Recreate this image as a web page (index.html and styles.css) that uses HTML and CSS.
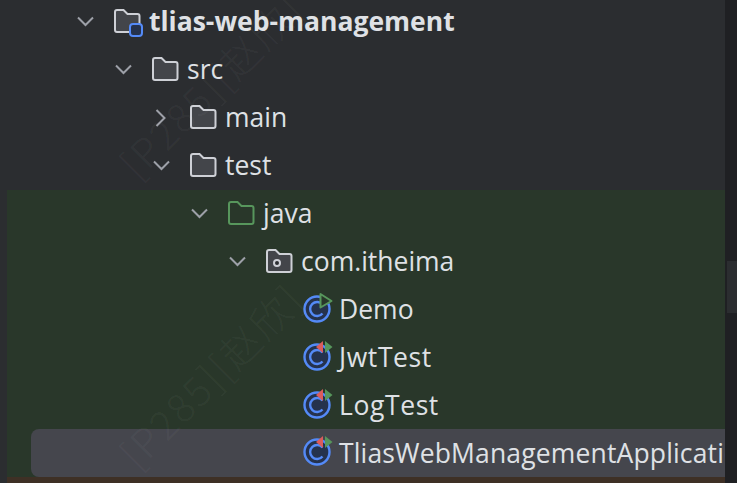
FILE: index.html
```html
<!DOCTYPE html>
<html lang="en">
<head>
    <meta charset="UTF-8">
    <meta name="viewport" content="width=device-width, initial-scale=1.0">
    <title>Project tree</title>
    <link rel="stylesheet" href="styles.css">
</head>
<body>
<svg class="defs" width="0" height="0">
    <symbol id="chev-down" viewBox="0 0 24 24"><path d="M5 7.500l7.500 7.500L20 7.500"/></symbol>
    <symbol id="chev-right" viewBox="0 0 24 24"><path d="M7.500 4l8 8-8 8"/></symbol>
    <symbol id="folder" viewBox="0 0 32 32"><path d="M6 4h6.500l4 4h10a2 2 0 0 1 2 2v14a2 2 0 0 1-2 2H6a2 2 0 0 1-2-2V6a2 2 0 0 1 2-2z"/></symbol>
    <symbol id="cls" viewBox="0 0 32 32">
        <circle class="cls-ring" cx="16" cy="15" r="12.500"/>
        <path class="cls-c" d="M21.500 10.500a7 7 0 1 0 0 9"/>
    </symbol>
</svg>
<div class="sidebar-edge"></div>
<div class="main">
    <div class="tree">
        <div class="row d0">
            <svg class="chev"><use href="#chev-down"/></svg>
            <svg class="icon folder"><use href="#folder"/><rect class="module-badge" x="19" y="18" width="12" height="12" rx="3"/></svg>
            <span class="label bold">tlias-web-management</span>
        </div>
        <div class="row d1">
            <svg class="chev"><use href="#chev-down"/></svg>
            <svg class="icon folder"><use href="#folder"/></svg>
            <span class="label">src</span>
        </div>
        <div class="row d2">
            <svg class="chev"><use href="#chev-right"/></svg>
            <svg class="icon folder"><use href="#folder"/></svg>
            <span class="label">main</span>
        </div>
        <div class="row d2">
            <svg class="chev"><use href="#chev-down"/></svg>
            <svg class="icon folder"><use href="#folder"/></svg>
            <span class="label">test</span>
        </div>
        <div class="test-root">
            <div class="row d3">
                <svg class="chev"><use href="#chev-down"/></svg>
                <svg class="icon folder-green"><use href="#folder"/></svg>
                <span class="label">java</span>
            </div>
            <div class="row d4">
                <svg class="chev"><use href="#chev-down"/></svg>
                <svg class="icon folder"><use href="#folder"/><circle class="pkg-dot" cx="14" cy="17" r="3"/></svg>
                <span class="label">com.itheima</span>
            </div>
            <div class="row d5">
                <svg class="icon"><use href="#cls"/><path class="run" d="M19.500 0v13.500L30.500 7z"/></svg>
                <span class="label">Demo</span>
            </div>
            <div class="row d5">
                <svg class="icon"><use href="#cls"/><path class="arrow-red" d="M22 -1v12l-7-6z"/><path class="arrow-green" d="M24 -1v12l7.500-6z"/></svg>
                <span class="label caps">JwtTest</span>
            </div>
            <div class="row d5">
                <svg class="icon"><use href="#cls"/><path class="arrow-red" d="M22 -1v12l-7-6z"/><path class="arrow-green" d="M24 -1v12l7.500-6z"/></svg>
                <span class="label caps">LogTest</span>
            </div>
            <div class="row selected-wrap">
                <div class="pill">
                    <svg class="icon"><use href="#cls"/><path class="arrow-red" d="M22 -1v12l-7-6z"/><path class="arrow-green" d="M24 -1v12l7.500-6z"/></svg>
                    <span class="label long">TliasWebManagementApplication</span>
                </div>
            </div>
        </div>
        <div class="changed-row"></div>
    </div>
    <div class="watermark wm-top">[P285][赵欣]</div>
    <div class="watermark wm-bottom">[P285][赵欣]</div>
</div>
<div class="scroll-track">
    <div class="scroll-thumb"></div>
</div>
</body>
</html>
```

FILE: styles.css
```css
* {
    margin: 0;
    padding: 0;
    box-sizing: border-box;
}

html, body {
    width: 100%;
    height: 100%;
    overflow: hidden;
}

body {
    display: flex;
    background: #2b2d30;
    font-family: "Open Sans", sans-serif;
    font-size: 26.5px;
    color: #dfe1e5;
}

.defs {
    position: absolute;
}

.sidebar-edge {
    width: 7px;
}

.main {
    position: relative;
    flex: 1;
    overflow: hidden;
    min-width: 0;
}

.scroll-track {
    width: 12px;
    background: #1f2023;
    padding-top: 261px;
    padding-left: 2px;
}

.scroll-thumb {
    height: 52px;
    background: #2b2d30;
}

.tree {
    margin-top: -2px;
}

.row {
    display: flex;
    align-items: center;
    height: 48px;
    white-space: nowrap;
}

.test-root {
    background: #29372a;
}

.changed-row {
    height: 8px;
    background: #3e3025;
}

.d0 { padding-left: 66px; }
.d1 { padding-left: 104px; }
.d2 { padding-left: 142px; }
.d3 { padding-left: 180px; }
.d4 { padding-left: 218px; }
.d5 { padding-left: 294px; }

.selected-wrap {
    height: 47px;
    align-items: flex-start;
    padding-left: 24px;
}

.pill {
    display: flex;
    align-items: center;
    width: 100%;
    height: 48px;
    margin-top: -1px;
    padding-left: 270px;
    background: #45464d;
    border-radius: 8px 0 0 8px;
}

.chev {
    width: 24px;
    height: 24px;
    margin-right: 14px;
    fill: none;
    stroke: #9da0a8;
    stroke-width: 2;
}

.icon {
    width: 32px;
    height: 32px;
    flex-shrink: 0;
    overflow: visible;
}

.label {
    margin-left: 6px;
    margin-bottom: 2px;
}

.caps {
    letter-spacing: 0.6px;
}

.long {
    letter-spacing: 0.15px;
    margin-bottom: 0;
}

.bold {
    font-weight: 700;
}

.folder {
    fill: #43454a;
    stroke: #ced0d6;
    stroke-width: 2;
}

.folder-green {
    fill: none;
    stroke: #57965c;
    stroke-width: 2;
}

.module-badge {
    fill: #25324d;
    stroke: #548af7;
    stroke-width: 2;
}

.pkg-dot {
    fill: #2b2d30;
    stroke: #ced0d6;
    stroke-width: 2;
}

.cls-ring {
    fill: #25324d;
    stroke: #548af7;
    stroke-width: 2.400;
}

.cls-c {
    fill: none;
    stroke: #548af7;
    stroke-width: 2.400;
}

.run {
    fill: #29372a;
    stroke: #57965c;
    stroke-width: 2;
    stroke-linejoin: round;
}

.arrow-red {
    fill: #db5c5c;
}

.arrow-green {
    fill: #57965c;
}

.watermark {
    position: absolute;
    width: 250px;
    font-family: "Noto Sans CJK SC", sans-serif;
    font-size: 40px;
    font-weight: 300;
    letter-spacing: 2px;
    color: rgba(255, 255, 255, 0.05);
    white-space: nowrap;
    transform: rotate(-45deg);
    pointer-events: none;
}

.wm-top {
    left: 82px;
    top: 52px;
}

.wm-bottom {
    left: 82px;
    top: 342px;
}
```
